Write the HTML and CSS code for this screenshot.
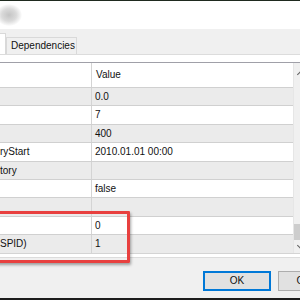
FILE: index.html
```html
<!DOCTYPE html>
<html>
<head>
  <meta charset="UTF-8">
  <link rel="stylesheet" href="styles.css">
  <title>Properties</title>
</head>
<body>
  <div class="window">
    <div class="topline"></div>
    <div class="header"><span class="blob"></span></div>

    <div class="tabs">
      <div class="tab selected"></div>
      <div class="tab">Dependencies</div>
    </div>

    <div class="page">
      <div class="grid-wrap">
        <div class="grid">
          <div class="row head"><div class="name"></div><div class="val">Value</div></div>
          <div class="row odd"><div class="name"></div><div class="val">0.0</div></div>
          <div class="row"><div class="name"></div><div class="val">7</div></div>
          <div class="row odd"><div class="name"></div><div class="val">400</div></div>
          <div class="row"><div class="name">ryStart</div><div class="val">2010.01.01 00:00</div></div>
          <div class="row odd"><div class="name">tory</div><div class="val"></div></div>
          <div class="row"><div class="name"></div><div class="val">false</div></div>
          <div class="row odd"><div class="name"></div><div class="val"></div></div>
          <div class="row"><div class="name"></div><div class="val">0</div></div>
          <div class="row odd"><div class="name">SPID)</div><div class="val">1</div></div>
        </div>
        <div class="scroll">
          <div class="arrow up"></div>
          <div class="track"><div class="thumb"></div></div>
          <div class="arrow down"></div>
        </div>
      </div>
    </div>

    <div class="footer">
      <button class="btn default">OK</button>
      <button class="btn">Cancel</button>
    </div>
    <div class="botline"></div>

    <div class="mark"></div>
  </div>
</body>
</html>
```

FILE: styles.css
```css
html, body {
  margin: 0;
  padding: 0;
}

body {
  font-family: "Liberation Sans", Arial, sans-serif;
  font-size: 10px;
  color: #111;
}

.window {
  position: relative;
  width: 300px;
  height: 300px;
  overflow: hidden;
  display: flex;
  flex-direction: column;
  background: #f0f0f0;
}

.topline {
  height: 1px;
  background: #1f2a1f;
}

.header {
  height: 28px;
  background: #fff;
  position: relative;
}

.blob {
  position: absolute;
  left: -4px;
  top: 3px;
  width: 26px;
  height: 22px;
  border-radius: 50%;
  background: radial-gradient(ellipse at center, #c4c4c4 0%, #dadada 40%, rgba(255,255,255,0) 72%);
}

.tabs {
  height: 25px;
  display: flex;
  align-items: flex-end;
  background: #f0f0f0;
}

.tab {
  box-sizing: border-box;
  height: 17px;
  padding: 0 4px;
  border: 1px solid #d9d9d9;
  border-bottom: none;
  line-height: 16px;
  width: 71px;
}

.tab.selected {
  width: 6px;
  height: 21px;
  padding: 0;
  background: #fff;
  border-left: none;
  border-color: #d9d9d9;
}

.page {
  background: #fff;
  border-top: 1px solid #dcdcdc;
  border-bottom: 1px solid #dcdcdc;
  padding: 7px 0 3px;
}

.grid-wrap {
  display: flex;
  border-top: 1px solid #a0a0a8;
  border-bottom: 1px solid #d4d4d4;
}

.grid {
  width: 293px;
}

.row {
  box-sizing: border-box;
  display: flex;
  height: 18.4px;
  line-height: 17px;
  border-top: 1px solid #d0d0d0;
  background: #fff;
}

.row.odd {
  background: #ebebeb;
}

.row.head {
  height: 24px;
  line-height: 24px;
  border-top: none;
}

.name {
  box-sizing: border-box;
  width: 92px;
  border-right: 1px solid #d4d4d4;
  white-space: nowrap;
  overflow: hidden;
}

.val {
  padding-left: 3px;
  white-space: nowrap;
}

.row.head .val {
  padding-left: 4px;
}

.scroll {
  flex: 1;
  display: flex;
  flex-direction: column;
  background: #f0f0f0;
  border-left: 1px solid #e6e6e6;
}

.arrow {
  height: 17px;
  position: relative;
}

.arrow:after {
  content: "";
  position: absolute;
  left: 4px;
  width: 4px;
  height: 4px;
  border-left: 1px solid #606060;
  border-top: 1px solid #606060;
}

.arrow.up:after {
  top: 9px;
  transform: rotate(45deg);
}

.arrow.down {
  height: 11px;
}

.arrow.down:after {
  top: 1px;
  transform: rotate(225deg);
}

.track {
  flex: 1;
  position: relative;
}

.thumb {
  position: absolute;
  left: 0;
  right: 0;
  bottom: 2px;
  height: 16px;
  background: #cdcdcd;
}

.footer {
  flex: 1;
  display: flex;
  align-items: flex-start;
  padding: 13px 0 0 203px;
  gap: 7px;
}

.btn {
  box-sizing: border-box;
  flex: none;
  width: 68px;
  height: 20px;
  padding: 0;
  background: #e1e1e1;
  border: 1px solid #adadad;
  font-family: "Liberation Sans", Arial, sans-serif;
  font-size: 10px;
  color: #111;
}

.btn.default {
  border: 2px solid #0078d7;
}

.botline {
  height: 2px;
  background: #1c1c1c;
}

.mark {
  position: absolute;
  left: -4px;
  top: 211px;
  width: 128px;
  height: 46px;
  border: 3px solid #e8403f;
  border-radius: 1px;
  box-shadow: 1px 2px 3px rgba(0, 0, 0, 0.35);
}
```
